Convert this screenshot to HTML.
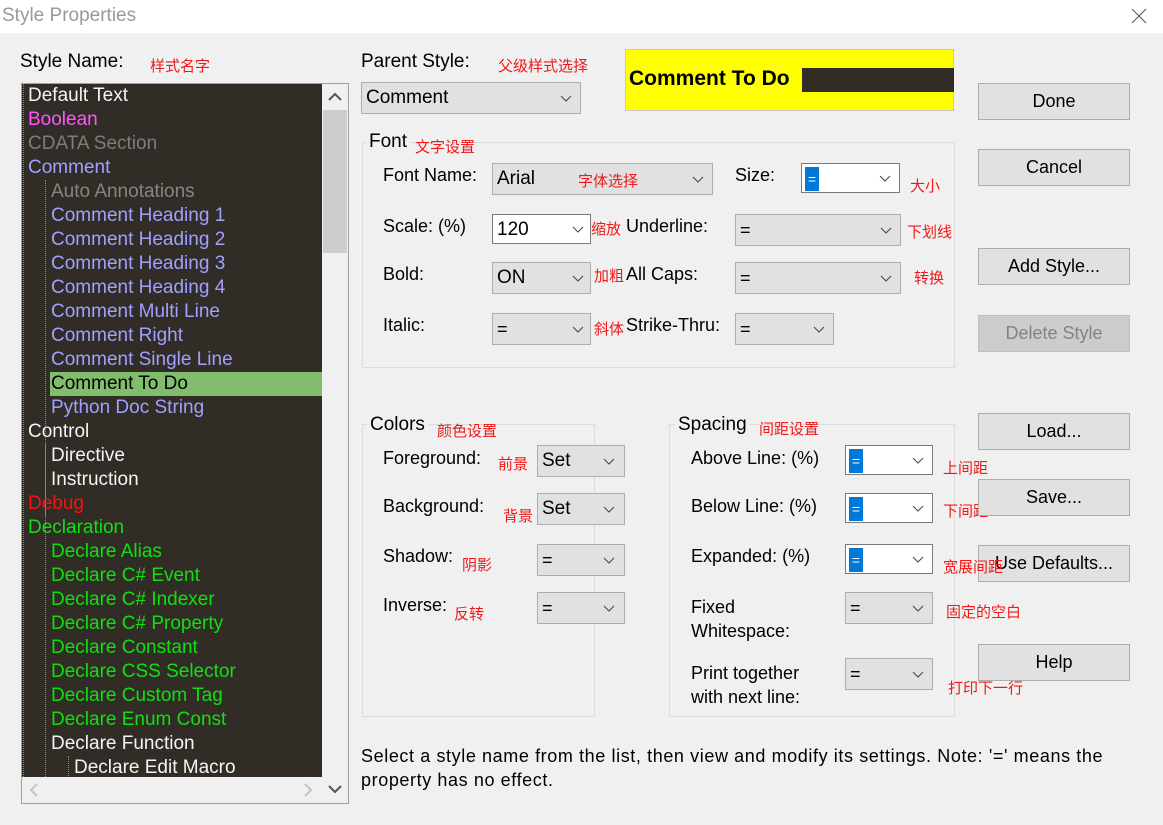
<!DOCTYPE html>
<html><head><meta charset="utf-8"><style>
*{margin:0;padding:0;box-sizing:border-box}
body{width:1163px;height:825px;background:#f0f0f0;font-family:"Liberation Sans","Noto Sans CJK SC",sans-serif;font-size:18px;color:#000;position:relative;overflow:hidden}
.a{position:absolute;white-space:nowrap}
.r{color:#f01818;font-size:15px}
.cb{position:absolute;border:1px solid #adadad;background:#e1e1e1;height:32px}
.cb.w{background:#fff;border-color:#7a7a7a}
.cb span{position:absolute;left:4px;top:5px}
.cb svg{position:absolute;right:8px;top:12px}
.btn{position:absolute;left:978px;width:152px;height:37px;border:1px solid #adadad;background:#e1e1e1;text-align:center;line-height:35px;font-size:18px}
.grp{position:absolute;border:1px solid #dcdcdc}
.li{position:absolute;height:24px;line-height:24px;font-size:19px;white-space:nowrap}
.sel{position:absolute;left:3px;top:3px;width:14px;height:24px;background:#0078d7;color:#fff;font-size:14px;line-height:24px;text-align:center}
</style></head><body>
<div class="a" style="left:0;top:0;width:1163px;height:33px;background:#fff"></div>
<div class="a" style="left:2px;top:5px;font-size:19px;color:#999">Style Properties</div>
<svg class="a" style="left:1131px;top:8px" width="16" height="16"><path d="M1 1L15 15M15 1L1 15" stroke="#555" stroke-width="1"/></svg>

<div class="a" style="left:20px;top:51px;font-size:19px">Style Name:</div>
<div class="a r" style="left:150px;top:55px">样式名字</div>

<div class="a" style="left:21px;top:83px;width:328px;height:721px;border:1px solid #a0a0a0;background:#f0f0f0"></div>
<div class="a" style="left:22px;top:84px;width:300px;height:693px;background:#312d26;overflow:hidden">
<div class="a" style="left:1px;top:0;height:693px;border-left:1px dotted #888"></div>
<div class="a" style="left:23px;top:96px;height:336px;border-left:1px dotted #888"></div>
<div class="a" style="left:23px;top:360px;height:333px;border-left:1px dotted #888"></div>
<div class="a" style="left:46px;top:672px;height:24px;border-left:1px dotted #888"></div>
<div class="a" style="left:28px;top:288px;width:272px;height:24px;background:#80bd6c"></div>
</div>
<div style="position:absolute;left:22px;top:84px;">
<div class="li" style="left:6px;top:0;color:#f4f4f4">Default Text</div>
<div class="li" style="left:6px;top:24px;color:#ff55ff">Boolean</div>
<div class="li" style="left:6px;top:48px;color:#7d7d7d">CDATA Section</div>
<div class="li" style="left:6px;top:72px;color:#a0a0ff">Comment</div>
<div class="li" style="left:29px;top:96px;color:#858585">Auto Annotations</div>
<div class="li" style="left:29px;top:120px;color:#a0a0ff">Comment Heading 1</div>
<div class="li" style="left:29px;top:144px;color:#a0a0ff">Comment Heading 2</div>
<div class="li" style="left:29px;top:168px;color:#a0a0ff">Comment Heading 3</div>
<div class="li" style="left:29px;top:192px;color:#a0a0ff">Comment Heading 4</div>
<div class="li" style="left:29px;top:216px;color:#a0a0ff">Comment Multi Line</div>
<div class="li" style="left:29px;top:240px;color:#a0a0ff">Comment Right</div>
<div class="li" style="left:29px;top:264px;color:#a0a0ff">Comment Single Line</div>
<div class="li" style="left:29px;top:288px;color:#000">Comment To Do</div>
<div class="li" style="left:29px;top:312px;color:#a0a0ff">Python Doc String</div>
<div class="li" style="left:6px;top:336px;color:#f4f4f4">Control</div>
<div class="li" style="left:29px;top:360px;color:#f4f4f4">Directive</div>
<div class="li" style="left:29px;top:384px;color:#f4f4f4">Instruction</div>
<div class="li" style="left:6px;top:408px;color:#ff1010">Debug</div>
<div class="li" style="left:6px;top:432px;color:#10e010">Declaration</div>
<div class="li" style="left:29px;top:456px;color:#10e010">Declare Alias</div>
<div class="li" style="left:29px;top:480px;color:#10e010">Declare C# Event</div>
<div class="li" style="left:29px;top:504px;color:#10e010">Declare C# Indexer</div>
<div class="li" style="left:29px;top:528px;color:#10e010">Declare C# Property</div>
<div class="li" style="left:29px;top:552px;color:#10e010">Declare Constant</div>
<div class="li" style="left:29px;top:576px;color:#10e010">Declare CSS Selector</div>
<div class="li" style="left:29px;top:600px;color:#10e010">Declare Custom Tag</div>
<div class="li" style="left:29px;top:624px;color:#10e010">Declare Enum Const</div>
<div class="li" style="left:29px;top:648px;color:#f4f4f4">Declare Function</div>
<div class="li" style="left:52px;top:672px;color:#f4f4f4;height:21px;overflow:hidden">Declare Edit Macro</div>
</div>
<div class="a" style="left:323px;top:110px;width:24px;height:143px;background:#cdcdcd"></div>
<svg class="a" style="left:328px;top:92px" width="14" height="10"><path d="M1 8L7 2L13 8" fill="none" stroke="#555" stroke-width="2"/></svg>
<svg class="a" style="left:328px;top:784px" width="14" height="10"><path d="M1 2L7 8L13 2" fill="none" stroke="#555" stroke-width="2"/></svg>
<svg class="a" style="left:29px;top:783px" width="10" height="14"><path d="M8 1L2 7L8 13" fill="none" stroke="#c4c4c4" stroke-width="2"/></svg>
<svg class="a" style="left:303px;top:783px" width="10" height="14"><path d="M2 1L8 7L2 13" fill="none" stroke="#c4c4c4" stroke-width="2"/></svg>

<div class="a" style="left:361px;top:51px;font-size:19px">Parent Style:</div>
<div class="a r" style="left:498px;top:55px">父级样式选择</div>
<div class="cb" style="left:361px;top:82px;width:220px;height:32px"><span style="font-size:19px;top:4px">Comment</span><svg width="12" height="8"><path d="M1 1L6 6L11 1" fill="none" stroke="#444"/></svg></div>

<div class="a" style="left:625px;top:49px;width:329px;height:62px;background:#ffff00;border:1px solid #c8c8c8"></div>
<div class="a" style="left:629px;top:67px;font-size:21px;font-weight:bold">Comment To Do</div>
<div class="a" style="left:802px;top:68px;width:152px;height:24px;background:#312d26"></div>

<div class="grp" style="left:362px;top:142px;width:593px;height:226px"></div>
<div class="a" style="left:366px;top:131px;font-size:19px;background:#f0f0f0;padding:0 3px">Font</div>
<div class="a r" style="left:415px;top:136px">文字设置</div>
<div class="a" style="left:383px;top:165px">Font Name:</div>
<div class="cb" style="left:492px;top:163px;width:221px"><span style="font-size:19px;top:4px">Arial</span><span class="r" style="left:85px;top:6px">字体选择</span><svg width="12" height="8"><path d="M1 1L6 6L11 1" fill="none" stroke="#444"/></svg></div>
<div class="a" style="left:735px;top:165px">Size:</div>
<div class="cb w" style="left:801px;top:163px;width:99px;height:30px"><div class="sel">=</div><svg width="12" height="8" style="top:11px"><path d="M1 1L6 6L11 1" fill="none" stroke="#444"/></svg></div>
<div class="a r" style="left:910px;top:175px">大小</div>
<div class="a" style="left:383px;top:216px">Scale: (%)</div>
<div class="cb w" style="left:492px;top:214px;width:99px;height:30px"><span style="font-size:19px;top:4px">120</span><svg width="12" height="8" style="top:11px;right:6px"><path d="M1 1L6 6L11 1" fill="none" stroke="#444"/></svg></div>
<div class="a r" style="left:591px;top:218px">缩放</div>
<div class="a" style="left:626px;top:216px">Underline:</div>
<div class="cb" style="left:735px;top:214px;width:166px"><span>=</span><svg width="12" height="8"><path d="M1 1L6 6L11 1" fill="none" stroke="#444"/></svg></div>
<div class="a r" style="left:907px;top:221px">下划线</div>
<div class="a" style="left:383px;top:264px">Bold:</div>
<div class="cb" style="left:492px;top:262px;width:99px"><span style="font-size:19px;top:4px">ON</span><svg width="12" height="8" style="right:6px"><path d="M1 1L6 6L11 1" fill="none" stroke="#444"/></svg></div>
<div class="a r" style="left:594px;top:265px">加粗</div>
<div class="a" style="left:626px;top:264px">All Caps:</div>
<div class="cb" style="left:735px;top:262px;width:166px"><span>=</span><svg width="12" height="8"><path d="M1 1L6 6L11 1" fill="none" stroke="#444"/></svg></div>
<div class="a r" style="left:914px;top:267px">转换</div>
<div class="a" style="left:383px;top:315px">Italic:</div>
<div class="cb" style="left:492px;top:313px;width:99px"><span>=</span><svg width="12" height="8" style="right:6px"><path d="M1 1L6 6L11 1" fill="none" stroke="#444"/></svg></div>
<div class="a r" style="left:594px;top:318px">斜体</div>
<div class="a" style="left:626px;top:315px">Strike-Thru:</div>
<div class="cb" style="left:735px;top:313px;width:99px"><span>=</span><svg width="12" height="8"><path d="M1 1L6 6L11 1" fill="none" stroke="#444"/></svg></div>

<div class="grp" style="left:362px;top:424px;width:233px;height:293px"></div>
<div class="a" style="left:367px;top:414px;font-size:19px;background:#f0f0f0;padding:0 3px">Colors</div>
<div class="a r" style="left:437px;top:420px">颜色设置</div>
<div class="a" style="left:383px;top:448px">Foreground:</div>
<div class="a r" style="left:498px;top:453px">前景</div>
<div class="cb" style="left:537px;top:445px;width:88px"><span style="font-size:19px;top:4px">Set</span><svg width="12" height="8" style="right:9px"><path d="M1 1L6 6L11 1" fill="none" stroke="#444"/></svg></div>
<div class="a" style="left:383px;top:496px">Background:</div>
<div class="a r" style="left:503px;top:505px">背景</div>
<div class="cb" style="left:537px;top:493px;width:88px"><span style="font-size:19px;top:4px">Set</span><svg width="12" height="8" style="right:9px"><path d="M1 1L6 6L11 1" fill="none" stroke="#444"/></svg></div>
<div class="a" style="left:383px;top:546px">Shadow:</div>
<div class="a r" style="left:462px;top:554px">阴影</div>
<div class="cb" style="left:537px;top:544px;width:88px"><span>=</span><svg width="12" height="8" style="right:9px"><path d="M1 1L6 6L11 1" fill="none" stroke="#444"/></svg></div>
<div class="a" style="left:383px;top:595px">Inverse:</div>
<div class="a r" style="left:454px;top:603px">反转</div>
<div class="cb" style="left:537px;top:592px;width:88px"><span>=</span><svg width="12" height="8" style="right:9px"><path d="M1 1L6 6L11 1" fill="none" stroke="#444"/></svg></div>

<div class="grp" style="left:669px;top:424px;width:286px;height:293px"></div>
<div class="a" style="left:675px;top:414px;font-size:19px;background:#f0f0f0;padding:0 3px">Spacing</div>
<div class="a r" style="left:759px;top:418px">间距设置</div>
<div class="a" style="left:691px;top:448px">Above Line: (%)</div>
<div class="cb w" style="left:845px;top:445px;width:88px;height:30px"><div class="sel">=</div><svg width="12" height="8" style="top:11px"><path d="M1 1L6 6L11 1" fill="none" stroke="#444"/></svg></div>
<div class="a r" style="left:943px;top:457px">上间距</div>
<div class="a" style="left:691px;top:496px">Below Line: (%)</div>
<div class="cb w" style="left:845px;top:493px;width:88px;height:30px"><div class="sel">=</div><svg width="12" height="8" style="top:11px"><path d="M1 1L6 6L11 1" fill="none" stroke="#444"/></svg></div>
<div class="a r" style="left:943px;top:500px">下间距</div>
<div class="a" style="left:691px;top:546px">Expanded: (%)</div>
<div class="cb w" style="left:845px;top:544px;width:88px;height:30px"><div class="sel">=</div><svg width="12" height="8" style="top:11px"><path d="M1 1L6 6L11 1" fill="none" stroke="#444"/></svg></div>
<div class="a" style="left:691px;top:595px;line-height:24px">Fixed<br>Whitespace:</div>
<div class="cb" style="left:845px;top:592px;width:88px"><span>=</span><svg width="12" height="8"><path d="M1 1L6 6L11 1" fill="none" stroke="#444"/></svg></div>
<div class="a r" style="left:946px;top:601px">固定的空白</div>
<div class="a" style="left:691px;top:661px;line-height:24px">Print together<br>with next line:</div>
<div class="cb" style="left:845px;top:658px;width:88px"><span>=</span><svg width="12" height="8"><path d="M1 1L6 6L11 1" fill="none" stroke="#444"/></svg></div>
<div class="a r" style="left:948px;top:677px">打印下一行</div>

<div class="btn" style="top:83px">Done</div>
<div class="btn" style="top:149px">Cancel</div>
<div class="btn" style="top:248px">Add Style...</div>
<div class="btn" style="top:315px;background:#cccccc;border-color:#bfbfbf;color:#838383">Delete Style</div>
<div class="btn" style="top:413px">Load...</div>
<div class="btn" style="top:479px">Save...</div>
<div class="btn" style="top:545px">Use Defaults...</div>
<div class="a r" style="left:943px;top:556px">宽展间距</div>
<div class="btn" style="top:644px">Help</div>

<div class="a" style="left:361px;top:744px;line-height:24px;font-size:18px;letter-spacing:0.6px">Select a style name from the list, then view and modify its settings. Note: '=' means the<br>property has no effect.</div>
</body></html>
